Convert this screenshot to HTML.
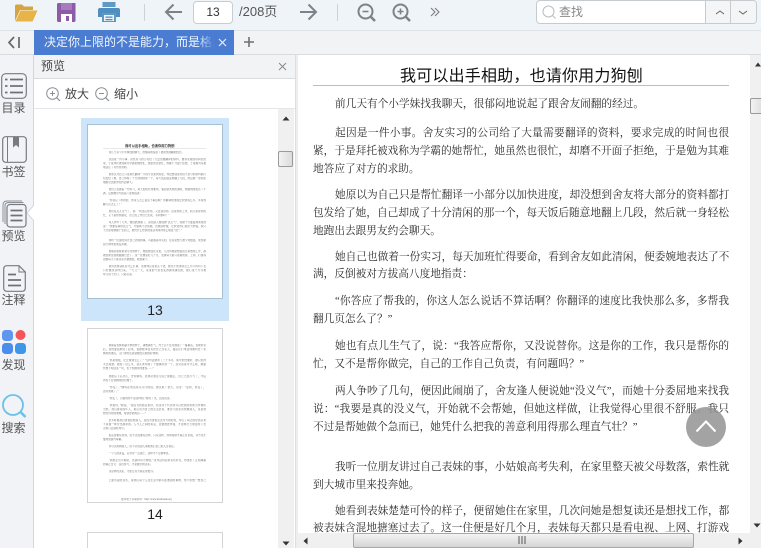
<!DOCTYPE html>
<html lang="zh"><head><meta charset="utf-8"><title>预览</title>
<style>
html,body{margin:0;padding:0;background:#fff}
#r{position:relative;width:761px;height:548px;overflow:hidden;background:#fff;font-family:"Liberation Sans","Noto Sans CJK SC",sans-serif;color:#444}
#r div,#r svg{position:absolute}
.rl{left:0;width:27px;text-align:center;font-size:12px;line-height:14px;color:#555}
.l{left:313px;width:416px;height:18px;margin-top:1px;font:10.67px/18px "Liberation Serif","Noto Serif CJK SC",serif;color:#2b2b2b;white-space:nowrap;text-align:justify;text-align-last:justify}
.i{left:335px;width:394px}
.s{text-align-last:left;width:auto}
.si{left:335px;text-align-last:left;width:auto}
.t{height:4px;font:2.62px/4px "Liberation Serif","Noto Serif CJK SC",serif;color:#666;white-space:nowrap;overflow:hidden;text-align:justify;text-align-last:justify;left:103px;width:103px}
.ti{left:108.5px;width:97.5px}
.ts{width:auto;text-align-last:left}
</style></head><body><div id="r">

<!-- toolbar -->
<div style="left:0;top:0;width:761px;height:30px;background:#eff4f9;border-bottom:1px solid #dfe3e7"></div>
<svg style="left:14px;top:2px" width="25" height="20" viewBox="0 0 25 20"><path d="M1 19V3.500L2 2.500H8L10 4.500H19V8H6L1 19Z" fill="#d7a53e"/><path d="M1.500 19.500L6.500 8.500H23.500L18.500 19.500Z" fill="#e8b347"/></svg>
<svg style="left:57px;top:3px" width="19" height="19" viewBox="0 0 19 19"><path d="M0 1.500Q0 0 1.500 0H18.500V17.500Q18.500 19 17 19H1.500Q0 19 0 17.500Z" fill="#8d5ba8"/><rect x="4" y="0" width="11" height="7" fill="#a77cbe"/><rect x="4" y="11" width="11" height="8" fill="#fff"/><rect x="9" y="13" width="3" height="5" fill="#8d5ba8"/></svg>
<svg style="left:98px;top:2px" width="22" height="20" viewBox="0 0 22 20"><rect x="4.500" y="0" width="13" height="5" fill="#5f9ac6"/><path d="M0 8Q0 6 2 6H20Q22 6 22 8V15H18V11H4V15H0Z" fill="#4f8fbf"/><rect x="5" y="12" width="12" height="8" fill="none" stroke="#4f8fbf" stroke-width="1.800"/><rect x="7.500" y="14.500" width="7" height="1.300" fill="#4f8fbf"/><rect x="7.500" y="17" width="7" height="1.300" fill="#4f8fbf"/></svg>
<div style="left:144px;top:4px;width:1px;height:17px;background:#cdd2d6"></div>
<svg style="left:164px;top:3px" width="19" height="18" viewBox="0 0 19 18"><path d="M18 9H2M9.500 1.500L2 9L9.500 16.500" fill="none" stroke="#7b8289" stroke-width="2"/></svg>
<div style="left:193px;top:1px;width:38px;height:21px;background:#fff;border:1px solid #c9cdd1;border-radius:4px;text-align:center;font-size:12px;line-height:21px;color:#333">13</div>
<div style="left:239px;top:4px;font-size:13px;line-height:16px;color:#555;white-space:nowrap">/208页</div>
<svg style="left:299px;top:3px" width="19" height="18" viewBox="0 0 19 18"><path d="M1 9H17M9.500 1.500L17 9L9.500 16.500" fill="none" stroke="#7b8289" stroke-width="2"/></svg>
<div style="left:337px;top:4px;width:1px;height:17px;background:#cdd2d6"></div>
<svg style="left:357px;top:3px" width="19" height="19" viewBox="0 0 19 19"><circle cx="8.500" cy="8.500" r="7" fill="none" stroke="#7b8289" stroke-width="2"/><path d="M13.500 13.500L18 18" stroke="#7b8289" stroke-width="2.500"/><path d="M5.500 8.500H11.500" stroke="#7b8289" stroke-width="1.600"/></svg>
<svg style="left:392px;top:3px" width="19" height="19" viewBox="0 0 19 19"><circle cx="8.500" cy="8.500" r="7" fill="none" stroke="#7b8289" stroke-width="2"/><path d="M13.500 13.500L18 18" stroke="#7b8289" stroke-width="2.500"/><path d="M5.500 8.500H11.500M8.500 5.500V11.500" stroke="#7b8289" stroke-width="1.600"/></svg>
<svg style="left:430px;top:7px" width="10" height="10" viewBox="0 0 10 10"><path d="M1 1L5 5L1 9M5 1L9 5L5 9" fill="none" stroke="#777" stroke-width="1"/></svg>
<!-- search -->
<div style="left:536px;top:0;width:219px;height:22px;background:#fff;border:1px solid #c6cbd0;border-radius:4px"></div>
<svg style="left:542px;top:5px" width="15" height="15" viewBox="0 0 15 15"><circle cx="6.500" cy="6.500" r="5.500" fill="none" stroke="#b9bdc1" stroke-width="1"/><path d="M10.500 10.500L13.500 13.500" stroke="#b9bdc1" stroke-width="1"/></svg>
<div style="left:559px;top:4px;font-size:12px;line-height:16px;color:#888">查找</div>
<div style="left:705px;top:1px;width:50px;height:22px;background:#f3f5f7;border-radius:0 4px 4px 0;border-left:1px solid #c6cbd0"></div>
<div style="left:730px;top:1px;width:1px;height:22px;background:#c6cbd0"></div>
<svg style="left:714px;top:9px" width="12" height="7" viewBox="0 0 12 7"><path d="M2 5L6 2L10 5" fill="none" stroke="#666" stroke-width="1"/></svg>
<svg style="left:737px;top:9px" width="12" height="7" viewBox="0 0 12 7"><path d="M2 2L6 5L10 2" fill="none" stroke="#666" stroke-width="1"/></svg>

<!-- tab bar -->
<div style="left:0;top:31px;width:761px;height:23px;background:#f1f3f5;border-bottom:1px solid #d9dcdf"></div>
<svg style="left:7px;top:36px" width="15" height="13" viewBox="0 0 15 13"><path d="M7 1L2 6.500L7 12" fill="none" stroke="#666" stroke-width="1.700"/><path d="M12 1V12" stroke="#666" stroke-width="1.700"/></svg>
<div style="left:34px;top:30px;width:200px;height:25px;background:#4a7dd2"></div>
<div style="left:44px;top:34px;width:170px;height:17px;overflow:hidden;font-size:12px;line-height:17px;color:#f2f6fd;white-space:nowrap">决定你上限的不是能力，而是格局</div>
<div style="left:198px;top:30px;width:16px;height:25px;background:linear-gradient(90deg,rgba(74,125,210,0),#4a7dd2)"></div>
<svg style="left:217px;top:37px" width="11" height="11" viewBox="0 0 11 11"><path d="M2 2L9 9M9 2L2 9" stroke="#e6eefb" stroke-width="1.200"/></svg>
<svg style="left:243px;top:36px" width="12" height="12" viewBox="0 0 12 12"><path d="M6 1V11M1 6H11" stroke="#6b7278" stroke-width="1.600"/></svg>

<!-- left rail -->
<div style="left:0;top:55px;width:33px;height:493px;background:#f1f3f6;border-right:1px solid #d4d7da"></div>
<svg style="left:1px;top:73px" width="26" height="26" viewBox="0 0 26 26"><rect x="0.700" y="0.700" width="24.600" height="24.600" rx="4" fill="none" stroke="#777c82" stroke-width="1.200"/><path d="M9 6.500H22M9 13H22M9 19.500H22M4 6.500H6.500M4 13H6.500M4 19.500H6.500" stroke="#6d7278" stroke-width="1.800"/></svg>
<div class="rl" style="top:101px">目录</div>
<svg style="left:2px;top:136px" width="25" height="27" viewBox="0 0 25 27"><rect x="0.700" y="0.700" width="23.600" height="25.600" rx="3" fill="none" stroke="#777c82" stroke-width="1.200"/><path d="M5.500 1V26" stroke="#777c82" stroke-width="1"/><path d="M11 1V11.500L14 9L17 11.500V1Z" fill="#777c82"/></svg>
<div class="rl" style="top:165px">书签</div>
<svg style="left:2px;top:200px" width="25" height="28" viewBox="0 0 25 28"><path d="M20 1H5Q1 1 1 5V22" fill="none" stroke="#8b9096" stroke-width="1"/><path d="M21.500 2.500H6.500Q3 2.500 3 6V24" fill="none" stroke="#8b9096" stroke-width="1"/><rect x="5" y="4.500" width="19" height="22.500" rx="3" fill="#f1f3f6" stroke="#777c82" stroke-width="1.200"/><path d="M8.500 10.500H20.500M8.500 15.500H20.500M8.500 20.500H20.500" stroke="#6d7278" stroke-width="1.800"/></svg>
<div class="rl" style="top:229px">预览</div>
<svg style="left:26px;top:205px" width="8" height="16" viewBox="0 0 8 16"><path d="M8 0L1 8L8 16Z" fill="#fff"/><path d="M8 0L1 8L8 16" fill="none" stroke="#d4d7da"/></svg>
<svg style="left:3px;top:265px" width="23" height="27" viewBox="0 0 23 27"><path d="M4 0.700H16L22.300 7V23Q22.300 26.300 19 26.300H4Q0.700 26.300 0.700 23V4Q0.700 0.700 4 0.700Z" fill="none" stroke="#777c82" stroke-width="1.200"/><path d="M16 1V7H22" fill="none" stroke="#777c82" stroke-width="1"/><path d="M5 9.500H13M5 15H18M5 20.500H18" stroke="#6d7278" stroke-width="1.700"/></svg>
<div class="rl" style="top:293px">注释</div>
<svg style="left:2px;top:329px" width="25" height="26" viewBox="0 0 25 26"><rect x="0" y="1" width="11" height="11" rx="3.500" fill="#5f96f0"/><circle cx="18.500" cy="6" r="5" fill="#f45558"/><rect x="0" y="14" width="11" height="11" rx="3.500" fill="#4b8ced"/><rect x="13" y="14" width="11" height="11" rx="3.500" fill="#3e97e6"/></svg>
<div class="rl" style="top:358px">发现</div>
<svg style="left:1px;top:393px" width="26" height="26" viewBox="0 0 26 26"><circle cx="12" cy="12" r="10" fill="none" stroke="#6cc0ec" stroke-width="1.800"/><path d="M19.500 19L24.500 24" stroke="#6cc0ec" stroke-width="2.600"/></svg>
<div class="rl" style="top:421px">搜索</div>

<!-- preview panel -->
<div style="left:34px;top:55px;width:261px;height:23px;background:#f1f3f5;border-bottom:1px solid #d9dcdf"></div>
<div style="left:41px;top:59px;font-size:12px;line-height:15px;color:#444">预览</div>
<svg style="left:278px;top:62px" width="9" height="9" viewBox="0 0 9 9"><path d="M1 1L8 8M8 1L1 8" stroke="#888" stroke-width="1"/></svg>
<div style="left:34px;top:79px;width:261px;height:29px;background:#fff;border-bottom:1px solid #e4e6e8"></div>
<svg style="left:46px;top:87px" width="15" height="15" viewBox="0 0 15 15"><circle cx="6.500" cy="6.500" r="5.800" fill="none" stroke="#8a8f94"/><path d="M4 6.500H9M6.500 4V9" stroke="#8a8f94"/><path d="M10.800 10.800L14 14" stroke="#8a8f94" stroke-width="1.200"/></svg>
<div style="left:65px;top:87px;font-size:12px;line-height:15px;color:#444">放大</div>
<svg style="left:95px;top:87px" width="15" height="15" viewBox="0 0 15 15"><circle cx="6.500" cy="6.500" r="5.800" fill="none" stroke="#8a8f94"/><path d="M4 6.500H9" stroke="#8a8f94"/><path d="M10.800 10.800L14 14" stroke="#8a8f94" stroke-width="1.200"/></svg>
<div style="left:114px;top:87px;font-size:12px;line-height:15px;color:#444">缩小</div>

<!-- thumb 13 -->
<div style="left:81px;top:118px;width:148px;height:203px;background:#cde5fa"></div>
<div style="left:87px;top:124px;width:134px;height:173px;background:#fff;border:1px solid #a9bfd2"></div>
<div style="left:125px;top:143px;font:bold 3.300px/6px 'Liberation Sans','Noto Sans CJK SC',sans-serif;color:#333;white-space:nowrap">我可以出手相助，也请你用力狗刨</div>
<div style="left:103px;top:148px;width:103px;height:1px;background:#e8e8e8"></div>
<div class="t ti ts" style="top:151px">前几天有个小学妹找我聊天，很郁闷地说起了跟舍友闹翻的经过。</div>
<div class="t ti" style="top:158px">起因是一件小事。舍友实习的公司给了大量需要翻译的资料，要求完成的时间也很</div>
<div class="t" style="top:162px">紧，于是拜托被戏称为学霸的她帮忙，她虽然也很忙，却磨不开面子拒绝，于是勉为其难</div>
<div class="t ts" style="top:166px">地答应了对方的求助。</div>
<div class="t ti" style="top:173px">她原以为自己只是帮忙翻译一小部分以加快进度，却没想到舍友将大部分的资料都打</div>
<div class="t" style="top:177px">包发给了她，自己却成了十分清闲的那一个，每天饭后随意地翻上几段，然后就一身轻松</div>
<div class="t ts" style="top:181px">地跑出去跟男友约会聊天。</div>
<div class="t ti" style="top:188px">她自己也做着一份实习，每天加班忙得要命，看到舍友如此清闲，便委婉地表达了不</div>
<div class="t ts" style="top:192px">满，反倒被对方拔高八度地指责：</div>
<div class="t ti" style="top:199px">“你答应了帮我的，你这人怎么说话不算话啊？你翻译的速度比我快那么多，多帮我</div>
<div class="t ts" style="top:203px">翻几页怎么了？”</div>
<div class="t ti" style="top:210px">她也有点儿生气了，说：“我答应帮你，又没说替你。这是你的工作，我只是帮你的</div>
<div class="t ts" style="top:214px">忙，又不是帮你做完，自己的工作自己负责，有问题吗？”</div>
<div class="t ti" style="top:221px">两人争吵了几句，便因此闹崩了，舍友逢人便说她“没义气”，而她十分委屈地来找我</div>
<div class="t" style="top:225px">说：“我要是真的没义气，开始就不会帮她，但她这样做，让我觉得心里很不舒服。我只</div>
<div class="t ts" style="top:229px">不过是帮她做个急而已，她凭什么把我的善意利用得那么理直气壮？”</div>
<div class="t ti" style="top:239px">我听一位朋友讲过自己表妹的事，小姑娘高考失利，在家里整天被父母数落，索性就</div>
<div class="t ts" style="top:243px">到大城市里来投奔她。</div>
<div class="t ti" style="top:250px">她看到表妹楚楚可怜的样子，便留她住在家里，几次问她是想复读还是想找工作，都</div>
<div class="t" style="top:254px">被表妹含混地搪塞过去了。这一住便是好几个月，表妹每天都只是看电视、上网、打游戏</div>
<div class="t ts" style="top:258px">而她每天下班回家还要做饭、收拾屋子。</div>
<div class="t ti" style="top:265px">她问表妹到底有什么打算，表妹却总是低头不语，她也不知道该怎么开口再问下去</div>
<div class="t" style="top:269px">只好继续这样过着，一天又一天，家里的气氛也变得越来越沉默，她心里十分为难</div>
<div class="t ts" style="top:273px">却又说不出口，只能忍着。</div>
<div style="left:81px;top:301px;width:148px;text-align:center;font-size:14px;line-height:18px;color:#222">13</div>

<!-- thumb 14 -->
<div style="left:87px;top:328px;width:134px;height:173px;background:#fff;border:1px solid #d4d4d4"></div>
<div class="t ti" style="top:344px">她看着表妹那副无辜的样子，越想越生气，终于忍不住对她说了一番重话。表妹听完</div>
<div class="t" style="top:348px">后，竟然委屈地哭了起来，说她根本没有把自己当家人，随后还打电话向姨妈告了状</div>
<div class="t ts" style="top:352px">姨妈知道后，又打来电话责备她没有照顾好妹妹。</div>
<div class="t ti" style="top:359px">“你是姐姐，让让妹妹怎么了？”这句话她听了二十多年，如今依然要听，她只觉得</div>
<div class="t" style="top:363px">无比疲惫。她帮了这么多，到头来却成了不懂事的那一个，这究竟是为什么呢，她始</div>
<div class="t ts" style="top:367px">终想不明白这一切，也不知道该向谁说……”</div>
<div class="t ti" style="top:375px">她最后下定决心，告诉姨妈，表妹必须在月底之前搬走，自己已经尽力了，今后</div>
<div class="t ts" style="top:379px">再也不会替她收拾烂摊子。</div>
<div class="t ti" style="top:386px">“你变了。”姨妈在电话那头冷冷地说。她沉默了很久，回答：“是的，我变了，</div>
<div class="t ts" style="top:390px">因为我累了。”</div>
<div class="t ti ts" style="top:397px">“你变了，以前的你不是这样的。”她笑了笑，没有回答。</div>
<div class="t ti" style="top:404px">“我帮你，”她说，“是因为我愿意帮你，但这并不代表你可以把我的帮助当作理所</div>
<div class="t" style="top:408px">当然。我们都是成年人，都应该为自己的生活负责，谁也不能永远依赖别人，这是我</div>
<div class="t ts" style="top:412px">想告诉你的道理，希望你能明白……”</div>
<div class="t ti" style="top:419px">很多时候我们害怕拒绝别人，是因为害怕失去对方的好感，却忘了真正的好感从来</div>
<div class="t" style="top:423px">不是靠一味付出换来的。人与人之间的善意，需要彼此珍惜，才能够长久地留存下去</div>
<div class="t ts" style="top:427px">否则只会消耗殆尽。</div>
<div class="t ti" style="top:434px">善意需要有原则，给予也需要有边界，只有这样，你的帮助才真正有价值，对方也才</div>
<div class="t ts" style="top:438px">懂得感谢与尊重。</div>
<div class="t ti ts" style="top:445px">你可以帮助别人，但不必替别人承担他们自己的人生责任。</div>
<div class="t ti ts" style="top:452px">一个人的善良，应该带一点锋芒，这样才不会被辜负。</div>
<div class="t ti" style="top:459px">“我愿意出手相助，也请你用力狗刨。”这句话听起来有些好笑，却道出了互相尊重</div>
<div class="t ts" style="top:463px">的真正含义：各自努力，才是最好的关系。</div>
<div class="t ti ts" style="top:470px">而这样的关系，才能让双方都走得更远。</div>
<div class="t ti" style="top:479px">上面所说的这些，是我们每个人在生活中都可能遇到的事情，你不妨想一想自己</div>
<div class="t ts" style="left:121px;top:498px">更多电子书请访问：http://www.ireadweek.org</div>
<div style="left:81px;top:505px;width:148px;text-align:center;font-size:14px;line-height:18px;color:#222">14</div>
<div style="left:87px;top:532px;width:134px;height:20px;background:#fff;border:1px solid #d4d4d4"></div>

<!-- left scrollbar -->
<div style="left:278px;top:109px;width:16px;height:439px;background:#f0f0f0"></div>
<svg style="left:282px;top:116px" width="8" height="5" viewBox="0 0 8 5"><path d="M4 0.500L7.500 4.500H0.500Z" fill="#333"/></svg>
<div style="left:278px;top:151px;width:13px;height:14px;background:linear-gradient(90deg,#f2f2f2,#dcdcdc);border:1px solid #9a9a9a;border-radius:2px"></div>
<svg style="left:282px;top:541px" width="8" height="5" viewBox="0 0 8 5"><path d="M0.500 0.500H7.500L4 4.500Z" fill="#333"/></svg>
<div style="left:295px;top:55px;width:3px;height:493px;background:#eceef0;border-left:1px solid #dcdfe2;box-sizing:border-box"></div>

<!-- page -->
<div style="left:298px;top:55px;width:452px;height:478px;background:#fff"></div>
<div style="left:300px;top:66px;width:443px;text-align:center;font:16px/21px 'Liberation Sans','Noto Sans CJK SC',sans-serif;letter-spacing:.2px;color:#111">我可以出手相助，也请你用力狗刨</div>
<div style="left:313px;top:85px;width:416px;height:1px;background:#bdbdbd"></div>

<div class="l si" style="top:94px">前几天有个小学妹找我聊天，很郁闷地说起了跟舍友闹翻的经过。</div>
<div class="l i" style="top:123px">起因是一件小事。舍友实习的公司给了大量需要翻译的资料，要求完成的时间也很</div>
<div class="l" style="top:141px">紧，于是拜托被戏称为学霸的她帮忙，她虽然也很忙，却磨不开面子拒绝，于是勉为其难</div>
<div class="l s" style="top:159px">地答应了对方的求助。</div>
<div class="l i" style="top:185px">她原以为自己只是帮忙翻译一小部分以加快进度，却没想到舍友将大部分的资料都打</div>
<div class="l" style="top:203px">包发给了她，自己却成了十分清闲的那一个，每天饭后随意地翻上几段，然后就一身轻松</div>
<div class="l s" style="top:221px">地跑出去跟男友约会聊天。</div>
<div class="l i" style="top:247px">她自己也做着一份实习，每天加班忙得要命，看到舍友如此清闲，便委婉地表达了不</div>
<div class="l s" style="top:264px">满，反倒被对方拔高八度地指责：</div>
<div class="l i" style="top:291px">“你答应了帮我的，你这人怎么说话不算话啊？你翻译的速度比我快那么多，多帮我</div>
<div class="l s" style="top:309px">翻几页怎么了？”</div>
<div class="l i" style="top:336px">她也有点儿生气了，说：“我答应帮你，又没说替你。这是你的工作，我只是帮你的</div>
<div class="l s" style="top:354px">忙，又不是帮你做完，自己的工作自己负责，有问题吗？”</div>
<div class="l i" style="top:381px">两人争吵了几句，便因此闹崩了，舍友逢人便说她“没义气”，而她十分委屈地来找我</div>
<div class="l" style="top:399px">说：“我要是真的没义气，开始就不会帮她，但她这样做，让我觉得心里很不舒服。我只</div>
<div class="l s" style="top:417px">不过是帮她做个急而已，她凭什么把我的善意利用得那么理直气壮？”</div>
<div class="l i" style="top:457px">我听一位朋友讲过自己表妹的事，小姑娘高考失利，在家里整天被父母数落，索性就</div>
<div class="l s" style="top:475px">到大城市里来投奔她。</div>
<div class="l i" style="top:501px">她看到表妹楚楚可怜的样子，便留她住在家里，几次问她是想复读还是想找工作，都</div>
<div class="l" style="top:518px">被表妹含混地搪塞过去了。这一住便是好几个月，表妹每天都只是看电视、上网、打游戏</div>

<!-- back to top -->
<div style="left:686px;top:407px;width:40px;height:40px;border-radius:50%;background:rgba(150,150,150,.88)"></div>
<svg style="left:695px;top:418px" width="22" height="16" viewBox="0 0 22 16"><path d="M1.500 13.500L11 3.500L20.500 13.500" fill="none" stroke="#fff" stroke-width="2"/></svg>

<!-- right scrollbar -->
<div style="left:750px;top:55px;width:11px;height:493px;background:#f0f0f0"></div>
<svg style="left:755px;top:62px" width="6" height="5" viewBox="0 0 6 5"><path d="M3 0.500L6 4.500H0Z" fill="#333"/></svg>
<div style="left:750px;top:98px;width:13px;height:14px;background:linear-gradient(90deg,#f2f2f2,#dcdcdc);border:1px solid #9a9a9a;border-radius:2px"></div>
<svg style="left:753px;top:523px" width="8" height="5" viewBox="0 0 8 5"><path d="M0.500 0.500H7.500L4 4.500Z" fill="#333"/></svg>

<!-- bottom scrollbar -->
<div style="left:298px;top:533px;width:452px;height:15px;background:#f0f0f0"></div>
<svg style="left:303px;top:537px" width="5" height="8" viewBox="0 0 5 8"><path d="M4.500 0.500V7.500L0.500 4Z" fill="#333"/></svg>
<div style="left:353px;top:533px;width:339px;height:13px;background:linear-gradient(180deg,#f4f4f4,#d4d4d4);border:1px solid #a8a8a8;border-radius:2px"></div>
<svg style="left:518px;top:536px" width="9" height="8" viewBox="0 0 9 8"><path d="M1 0V8M4 0V8M7 0V8" stroke="#555" stroke-width="1"/></svg>
<svg style="left:738px;top:537px" width="5" height="8" viewBox="0 0 5 8"><path d="M0.500 0.500V7.500L4.500 4Z" fill="#333"/></svg>
</div></body></html>
